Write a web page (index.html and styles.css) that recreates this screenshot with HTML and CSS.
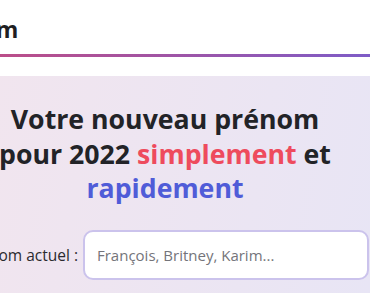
FILE: index.html
```html
<!DOCTYPE html>
<html lang="fr">
<head>
    <meta charset="UTF-8">
    <meta name="viewport" content="width=device-width, initial-scale=1.0">
    <title>Nouveau prénom</title>
    <link rel="stylesheet" href="styles.css">
</head>
<body>
    <div class="page">
        <header class="topbar">
            <div class="brand">Nouveau prénom</div>
        </header>
        <div class="topbar-line"></div>

        <section class="hero">
            <h1 class="hero-title">
                Votre nouveau prénom<br>
                pour 2022 <span class="accent-red">simplement</span> et<br>
                <span class="accent-blue">rapidement</span>
            </h1>

            <form class="name-form" onsubmit="return false;">
                <label for="current-name">Prénom actuel :</label>
                <input type="text" id="current-name" placeholder="François, Britney, Karim..." autofocus>
            </form>
        </section>
    </div>
</body>
</html>
```

FILE: styles.css
```css
* {
    margin: 0;
    padding: 0;
    box-sizing: border-box;
}

body {
    font-family: 'Open Sans', 'Noto Sans', sans-serif;
    background: white;
    color: #202124;
    overflow: hidden;
}

/* the page is a bit wider than the window, scrolled 40px to the right */
.page {
    width: 410px;
    margin-left: -40px;
}

.topbar {
    height: 54px;
    display: flex;
    align-items: center;
    padding-top: 4px;
}

.brand {
    font-size: 23px;
    font-weight: 700;
    color: #1f1f23;
    margin-left: -142px;
    white-space: nowrap;
}

.topbar-line {
    height: 3px;
    background: linear-gradient(90deg, #c24c82 0%, #7e5cc7 100%);
}

.hero {
    margin-top: 19px;
    height: 217px;
    padding-top: 26px;
    background: linear-gradient(100deg, #f2e5ee 0%, #e8e5f5 100%);
}

.hero-title {
    font-size: 26.7px;
    font-weight: 700;
    line-height: 34.5px;
    text-align: center;
    color: #222327;
    white-space: nowrap;
}

.accent-red {
    color: #ee4b5d;
}

.accent-blue {
    color: #505cd8;
}

.name-form {
    margin-top: 24px;
    display: flex;
    justify-content: flex-end;
    align-items: center;
    gap: 5px;
    padding-right: 1px;
}

.name-form label {
    font-size: 15.5px;
    color: #2a2a2e;
    white-space: nowrap;
}

.name-form input {
    flex-shrink: 0;
    width: 286px;
    height: 50px;
    padding: 0 12px;
    border: 2px solid #cbc3ec;
    border-radius: 10px;
    background: white;
    font-family: inherit;
    font-size: 15px;
    color: #222;
    outline: none;
}

.name-form input::placeholder {
    color: #74747a;
}
```
